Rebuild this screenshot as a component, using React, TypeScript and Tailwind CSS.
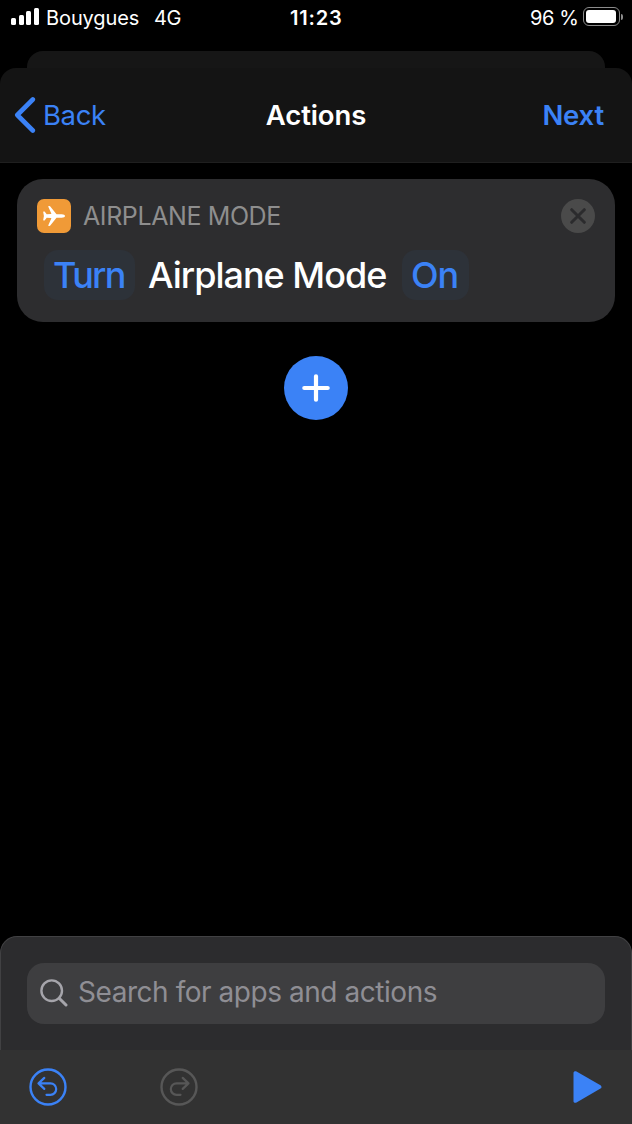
import type { ReactNode } from 'react';

interface IconProps {
    className?: string;
}

/** Bar heights of the cellular signal meter */
const SIGNAL_BARS = ['h-[7px]', 'h-[10px]', 'h-[14px]', 'h-[17px]'];

function BackIcon({ className }: IconProps) {
    return (
        <svg className={className} viewBox="0 0 22 36" fill="none" stroke="currentColor">
            <path d="M18.800 2.500 3.300 18l15.500 15.500" strokeWidth="4.600" strokeLinecap="round" strokeLinejoin="round" />
        </svg>
    );
}

function AirplaneIcon({ className }: IconProps) {
    return (
        <svg className={className} viewBox="0 0 22 20" fill="currentColor">
            <path d="M22 10c0 1-1.500 1.700-3.200 1.700h-4.600c-.5 0-.8.100-1.100.5l-5.800 7.200c-.2.300-.5.500-.9.500h-.7c-.3 0-.5-.3-.4-.6l3-6.900c.1-.3 0-.5-.3-.5L3.700 11.700 1.800 14.200c-.2.300-.4.400-.7.400H.6c-.3 0-.4-.2-.4-.5L.9 10 .2 5.900c0-.3.100-.5.400-.5h.5c.3 0 .5.100.7.400l1.900 2.500L8 8.100c.3 0 .4-.2.300-.5l-3-6.900C5.200.4 5.400.1 5.700.1h.7c.4 0 .7.200.9.5l5.800 7.200c.3.400.6.500 1.100.5h4.600c1.700 0 3.200.7 3.200 1.700Z" />
        </svg>
    );
}

function CloseIcon({ className }: IconProps) {
    return (
        <svg className={className} viewBox="0 0 16 16" fill="none" stroke="currentColor">
            <path d="m1.700 1.700 12.600 12.600M14.300 1.700 1.700 14.300" strokeWidth="3" strokeLinecap="round" />
        </svg>
    );
}

function PlusIcon({ className }: IconProps) {
    return (
        <svg className={className} viewBox="0 0 28 28" fill="none" stroke="currentColor">
            <path d="M14 2.300v23.400M2.300 14h23.400" strokeWidth="4.200" strokeLinecap="round" />
        </svg>
    );
}

function SearchIcon({ className }: IconProps) {
    return (
        <svg className={className} viewBox="0 0 28 28" fill="none" stroke="currentColor">
            <circle cx="11.700" cy="11.700" r="10.300" strokeWidth="2.400" />
            <path d="m19.200 19.200 6.800 6.800" strokeWidth="3" strokeLinecap="round" />
        </svg>
    );
}

function UndoIcon({ className }: IconProps) {
    return (
        <svg className={className} viewBox="0 0 38 38" fill="none" stroke="currentColor" strokeLinecap="round" strokeLinejoin="round">
            <circle cx="19" cy="19" r="17.500" strokeWidth="2.400" />
            <path d="m15.300 9.900-5.800 5.500 5.800 5.500M9.500 15.400H21.500a5.700 5.700 0 0 1 0 11.400h-4" strokeWidth="2.200" />
        </svg>
    );
}

function PlayIcon({ className }: IconProps) {
    return (
        <svg className={className} viewBox="0 0 28 32" fill="currentColor">
            <path d="M0 1.800C0 .4 1.700-.3 3 .4l24 13.800c1.300.8 1.300 2.600 0 3.400L3 31.600C1.700 32.300 0 31.600 0 30.200Z" />
        </svg>
    );
}

function StatusBar() {
    return (
        <div className="flex h-[51px] items-start pt-[5px] text-[20px] leading-[26px]">
            <div className="flex w-[290px] items-start pl-[11px]">
                <div className="mt-[3px] flex h-[17px] w-[35px] items-end gap-[2.500px]">
                    {SIGNAL_BARS.map((height) => (
                        <span key={height} className={`w-[5px] rounded-[1.500px] bg-white ${height}`} />
                    ))}
                </div>
                <span className="w-[108px] tracking-[-0.100px]">Bouygues</span>
                <span className="tracking-[-0.300px]">4G</span>
            </div>
            <span className="w-[240px] font-semibold tracking-[0.800px]">11:23</span>
            <span className="w-[53px] tracking-[-0.400px]">96 %</span>
            <div className="mt-[2px] flex items-center gap-[1px]">
                <div className="h-[19px] w-[37px] rounded-[6px] border-[1.500px] border-[#8c8c8c] p-[2px]">
                    <div className="h-full w-[30px] rounded-[3px] bg-white" />
                </div>
                <div className="h-[6px] w-[2px] rounded-r-full bg-[#8c8c8c]" />
            </div>
        </div>
    );
}

function NavBar() {
    return (
        <header className="bg-black">
            {/* Edge of the sheet stacked behind */}
            <div className="mx-[27px] h-[17px] rounded-t-[16px] bg-[#161616]" />
            <div className="grid h-[95px] grid-cols-3 items-center rounded-t-[16px] border-b border-[#1f1f1f] bg-[#141414] text-[27.500px]">
                <button className="flex items-center pl-[14px] text-[#3b82f6]">
                    <BackIcon className="h-[36px] w-[22px]" />
                    <span className="ml-[7px] pt-[1px] tracking-[-0.400px]">Back</span>
                </button>
                <h1 className="pt-[1px] text-center font-semibold tracking-[-0.100px]">Actions</h1>
                <button className="pt-[1px] pr-[28px] text-right font-semibold tracking-[-0.200px] text-[#3b82f6]">Next</button>
            </div>
        </header>
    );
}

function Token({ className, children }: { className: string; children: ReactNode }) {
    return (
        <button className={`flex h-[50px] items-center rounded-[14px] bg-[#2d3239] pl-[9px] text-[#3b82f6] ${className}`}>
            {children}
        </button>
    );
}

function ActionCard() {
    return (
        <section className="mx-[17px] mt-[16px] h-[143px] rounded-[26px] bg-[#2d2d2f] px-[20px] pt-[20px]">
            <div className="flex h-[34px] items-center">
                <div className="flex h-[34px] w-[34px] items-center justify-center rounded-[7px] bg-[#f09a37]">
                    <AirplaneIcon className="h-[20px] w-[22px]" />
                </div>
                <h2 className="ml-[12px] pt-[2px] text-[25px] tracking-[-0.400px] text-[#8e8e8e]">AIRPLANE MODE</h2>
                <button className="ml-auto flex h-[34px] w-[34px] items-center justify-center rounded-full bg-[#4a4a4a] text-[#2b2b2d]">
                    <CloseIcon className="h-[16px] w-[16px]" />
                </button>
            </div>
            <div className="mt-[17px] ml-[7px] flex h-[50px] items-center text-[36px] leading-[50px] font-medium tracking-[-1px] whitespace-nowrap">
                <Token className="w-[91px] tracking-[-1.700px]">Turn</Token>
                <span className="w-[267px] pl-[13px]">Airplane Mode</span>
                <Token className="w-[67px]">On</Token>
            </div>
        </section>
    );
}

function SearchPanel() {
    return (
        <div className="h-[114px] rounded-t-[17px] border-x border-t border-[#414143] bg-[#2c2c2e] px-[26px] pt-[26px]">
            <label className="flex h-[61px] items-center rounded-[17px] bg-[#3e3e40] pl-[13px] text-[28px] text-[#8f8e94]">
                <SearchIcon className="mb-[2px] h-[28px] w-[28px] text-[#a6a5ab]" />
                <span className="ml-[10px] pb-[3px] tracking-[-0.450px] whitespace-nowrap">Search for apps and actions</span>
            </label>
        </div>
    );
}

function Toolbar() {
    return (
        <footer className="flex h-[74px] items-center bg-[#323232] pl-[29px] pr-[30px] text-[#3b82f6]">
            <button>
                <UndoIcon className="h-[38px] w-[38px]" />
            </button>
            <button className="ml-[93px] text-[#575757]">
                <UndoIcon className="h-[38px] w-[38px] -scale-x-100" />
            </button>
            <button className="ml-auto">
                <PlayIcon className="h-[32px] w-[29px]" />
            </button>
        </footer>
    );
}

export default function App() {
    return (
        <div className="flex h-[1124px] w-[632px] flex-col overflow-hidden bg-black font-['Inter','Liberation_Sans',sans-serif] text-white">
            <StatusBar />
            <NavBar />
            <main className="flex flex-1 flex-col">
                <ActionCard />
                <button className="mt-[33.500px] flex h-[64px] w-[64px] items-center justify-center self-center rounded-full bg-[#3b82f6]">
                    <PlusIcon className="h-[28px] w-[28px]" />
                </button>
            </main>
            <SearchPanel />
            <Toolbar />
        </div>
    );
}
